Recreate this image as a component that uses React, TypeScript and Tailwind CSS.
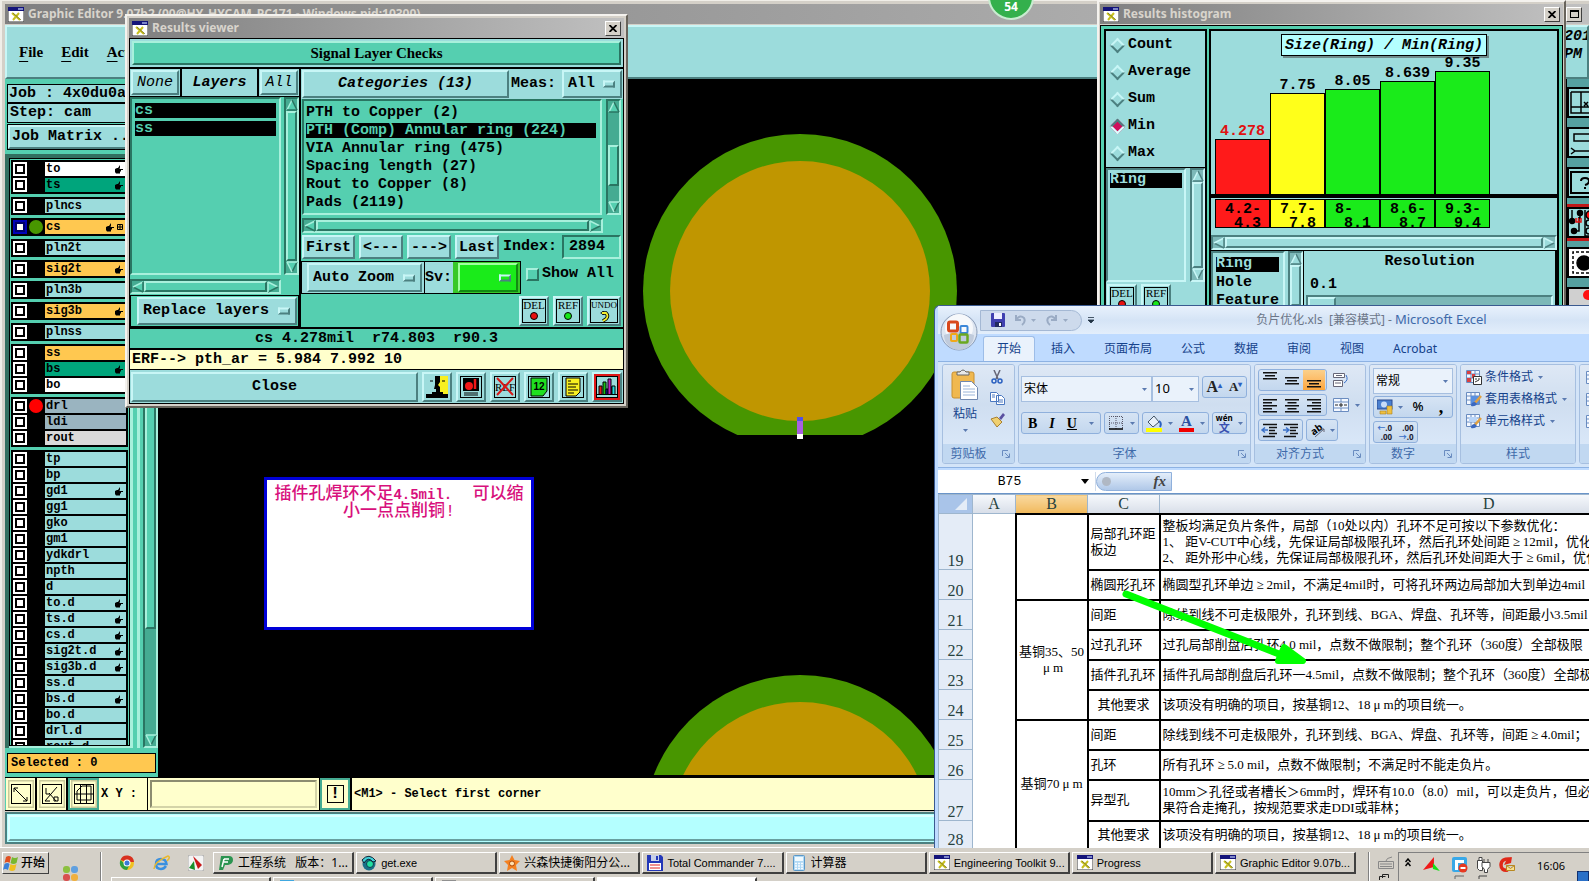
import { useState } from "react";
import type { ReactNode } from "react";
import clsx from "clsx";

const MONO = "font-['Liberation_Mono',monospace] font-bold text-[15px] leading-[18px]";
const MONO_SM = "font-['Liberation_Mono',monospace] font-bold text-[12px]";
const SERIF = "font-['Liberation_Serif',serif] font-bold";
const UI = "font-['Noto_Sans','Noto_Sans_CJK_SC',sans-serif]";

const BLUE_UP =
  "border-2 border-t-[#c8f6f6] border-l-[#c8f6f6] border-b-[#4c8080] border-r-[#4c8080] bg-[#9cdcdc]";
const BLUE_DOWN =
  "border-2 border-t-[#4c8080] border-l-[#4c8080] border-b-[#c8f6f6] border-r-[#c8f6f6] bg-[#9cdcdc]";
const GREEN_UP =
  "border-2 border-t-[#a8f0dc] border-l-[#a8f0dc] border-b-[#2a7562] border-r-[#2a7562] bg-[#55cfb0]";
const GREEN_DOWN =
  "border-2 border-t-[#2a7562] border-l-[#2a7562] border-b-[#a8f0dc] border-r-[#a8f0dc] bg-[#55cfb0]";
const WIN_UP =
  "border border-t-white border-l-white border-b-[#404040] border-r-[#404040] bg-[#d4d0c8]";

type LayerColor = "blue" | "white" | "green" | "orange" | "slate" | "gray";

interface Layer {
  name: string;
  color: LayerColor;
  hand?: boolean;
  dot?: "green" | "red";
  grid?: boolean;
}

const LAYER_BG: Record<LayerColor, string> = {
  blue: "bg-[#9cdcdc]",
  white: "bg-white",
  green: "bg-[#00a57c]",
  orange: "bg-[#ffc850]",
  slate: "bg-[#9ab4c0]",
  gray: "bg-[#dadada]",
};

const LAYER_GROUPS: Layer[][] = [
  [
    { name: "to", color: "white", hand: true },
    { name: "ts", color: "green", hand: true },
  ],
  [{ name: "plncs", color: "blue" }],
  [{ name: "cs", color: "orange", hand: true, dot: "green", grid: true }],
  [{ name: "pln2t", color: "blue" }],
  [{ name: "sig2t", color: "orange", hand: true }],
  [{ name: "pln3b", color: "blue" }],
  [{ name: "sig3b", color: "orange", hand: true }],
  [{ name: "plnss", color: "blue" }],
  [
    { name: "ss", color: "orange" },
    { name: "bs", color: "green", hand: true },
    { name: "bo", color: "white" },
  ],
  [
    { name: "drl", color: "slate", dot: "red" },
    { name: "ldi", color: "slate" },
    { name: "rout", color: "gray" },
  ],
  [
    { name: "tp", color: "blue" },
    { name: "bp", color: "blue" },
    { name: "gd1", color: "blue", hand: true },
    { name: "gg1", color: "blue" },
    { name: "gko", color: "blue" },
    { name: "gm1", color: "blue" },
    { name: "ydkdrl", color: "blue" },
    { name: "npth", color: "blue" },
    { name: "d", color: "blue" },
    { name: "to.d", color: "blue", hand: true },
    { name: "ts.d", color: "blue", hand: true },
    { name: "cs.d", color: "blue", hand: true },
    { name: "sig2t.d", color: "blue", hand: true },
    { name: "sig3b.d", color: "blue", hand: true },
    { name: "ss.d", color: "blue" },
    { name: "bs.d", color: "blue", hand: true },
    { name: "bo.d", color: "blue" },
    { name: "drl.d", color: "blue" },
    { name: "rout.d", color: "blue" },
  ],
];

const CATEGORIES = [
  "PTH to Copper (2)",
  "PTH (Comp) Annular ring (224)",
  "VIA Annular ring (475)",
  "Spacing length (27)",
  "Rout to Copper (8)",
  "Pads (2119)",
];

const BARS = [
  { value: "4.278", px: 55, bg: "bg-[#ff1a1a]", text: "text-[#e01010]", from: "4.2-", to: "4.3" },
  { value: "7.75", px: 101, bg: "bg-[#ffff1a]", text: "", from: "7.7-", to: "7.8" },
  { value: "8.05", px: 105, bg: "bg-[#1aeb1a]", text: "", from: "8-", to: "8.1" },
  { value: "8.639", px: 113, bg: "bg-[#1aeb1a]", text: "", from: "8.6-", to: "8.7" },
  { value: "9.35", px: 123, bg: "bg-[#1aeb1a]", text: "", from: "9.3-", to: "9.4" },
];

/* ---------- small shared pieces ---------- */

function WinIcon() {
  return (
    <svg width="16" height="15" viewBox="0 0 16 15" className="shrink-0">
      <rect width="16" height="15" fill="#fff" />
      <rect width="16" height="4" fill="#14147a" />
      <rect x="10" y="1" width="5" height="2" fill="#7d86c8" />
      <path d="M0 4v11h16V4" fill="none" stroke="#333" />
      <path d="M4 6l8 7M11 6l-6 7" stroke="#c8c020" strokeWidth="2" />
      <path d="M5 6l8 7" stroke="#55551a" strokeWidth="0.6" />
    </svg>
  );
}

function HandIcon() {
  return (
    <svg width="8" height="9" viewBox="0 0 8 9" className="shrink-0">
      <path d="M0 4l2-1h1l2-3v2.500L4.500 4H8v1H6v1H5.500v1H5v1.500H1L0 7z" fill="#000" />
    </svg>
  );
}

function Tri({ dir, dark, light, fill }: { dir: "up" | "down" | "left" | "right"; dark: string; light: string; fill: string }) {
  const turn = { up: 0, right: 90, down: 180, left: 270 }[dir];
  const litRight = dir === "down" || dir === "left";
  return (
    <svg width="12" height="12" viewBox="0 0 12 12" className="block shrink-0">
      <g transform={`rotate(${turn} 6 6)`}>
        <path d="M6 1L11 11H1z" fill={fill} />
        <path d="M1 11L6 1" stroke={litRight ? dark : light} strokeWidth="1.5" />
        <path d="M6 1L11 11" stroke={litRight ? light : dark} strokeWidth="1.5" />
        <path d="M11 11H1" stroke={dir === "down" || dir === "right" ? light : dark} strokeWidth="1.5" />
      </g>
    </svg>
  );
}

interface ScrollProps {
  vertical?: boolean;
  tone: "green" | "blue";
  before?: number;
  thumb?: number;
  after?: number;
}

function ScrollBar({ vertical, tone, before = 0, thumb = 1, after = 0 }: ScrollProps) {
  const green = tone === "green";
  const c = green
    ? { dark: "#2a7562", light: "#a8f0dc", fill: "#55cfb0" }
    : { dark: "#4c8080", light: "#c8f6f6", fill: "#9cdcdc" };
  const trough = green
    ? "border-t-[#2a7562] border-l-[#2a7562] border-b-[#a8f0dc] border-r-[#a8f0dc] bg-[#45ab92]"
    : "border-t-[#4c8080] border-l-[#4c8080] border-b-[#c8f6f6] border-r-[#c8f6f6] bg-[#7cb8b8]";
  return (
    <div className={clsx("flex shrink-0 border-2", vertical ? "w-[15px] flex-col" : "h-[15px]", trough)}>
      <Tri dir={vertical ? "up" : "left"} {...c} />
      <div style={{ flexGrow: before }} />
      <div className={green ? GREEN_UP : BLUE_UP} style={{ flexGrow: thumb }} />
      <div style={{ flexGrow: after }} />
      <Tri dir={vertical ? "down" : "right"} {...c} />
    </div>
  );
}

function TitleBar({ title, children }: { title: string; children?: ReactNode }) {
  return (
    <div
      className={clsx(
        UI,
        "flex h-[20px] shrink-0 items-center gap-[4px] bg-gradient-to-r from-[#808080] to-[#c0c0c0] px-[3px] text-[12px] leading-[18px] font-bold text-[#d8d4cc]"
      )}
    >
      <WinIcon />
      <span className="flex-1 truncate">{title}</span>
      {children}
    </div>
  );
}

function CloseButton() {
  return (
    <button aria-label="Close window" className={clsx(WIN_UP, "flex h-[15px] w-[16px] items-center justify-center")}>
      <svg width="8" height="7" viewBox="0 0 8 7">
        <path d="M0.5 0L7.5 7M7.5 0L0.5 7" stroke="#000" strokeWidth="1.8" />
      </svg>
    </button>
  );
}

function OptionMenu({ label, options, className }: { label: string; options: string[]; className?: string }) {
  return (
    <div className={clsx("relative", className)}>
      <select aria-label={label} className="h-full w-full appearance-none pr-[20px] pl-[4px] outline-none">
        {options.map((o) => (
          <option key={o}>{o}</option>
        ))}
      </select>
      <span className="pointer-events-none absolute top-1/2 right-[5px] h-[7px] w-[12px] -translate-y-1/2 border-2 border-t-[#c8f6f6] border-r-[#4c8080] border-b-[#4c8080] border-l-[#c8f6f6]" />
    </div>
  );
}

function SmallTool({ label, mark }: { label: string; mark: "red" | "green" | "undo" }) {
  return (
    <button
      aria-label={label}
      className={clsx(BLUE_UP, "flex h-[30px] items-center justify-center", mark === "undo" ? "w-[34px]" : "w-[30px]")}
    >
      <span
        className={clsx(
          "flex h-[24px] flex-col items-center border border-black bg-[#9cdcdc] font-['Liberation_Serif',serif] leading-[11px] font-normal",
          mark === "undo" ? "w-[28px] text-[9px]" : "w-[24px] text-[11px]"
        )}
      >
        {label}
        {mark === "undo" ? (
          <svg width="11" height="11" viewBox="0 0 11 11">
            <path d="M3 2h4q3 3 0 6l-3 2" fill="none" stroke="#000" strokeWidth="3.4" />
            <path d="M1 2l4-2v4z" fill="#000" />
            <path d="M3 2h4q3 3 0 6l-3 2" fill="none" stroke="#f4ee30" strokeWidth="1.8" />
          </svg>
        ) : (
          <span
            className={clsx("mt-px h-[8px] w-[8px] rounded-full border border-black", mark === "red" ? "bg-[#e81010]" : "bg-[#18e818]")}
          />
        )}
      </span>
    </button>
  );
}

/* ---------- Graphic Editor ---------- */

function LayerRow({ layer }: { layer: Layer }) {
  const active = layer.grid;
  return (
    <label className="flex h-[16px] w-full pb-[2px]">
      <input
        type="checkbox"
        className={clsx(
          "h-[14px] w-[14px] shrink-0 appearance-none border-2 bg-white",
          active ? "border-[#0000b8] shadow-[inset_0_0_0_2px_#000068]" : "border-white shadow-[inset_0_0_0_2px_#000]"
        )}
      />
      <span className="flex w-[18px] shrink-0 justify-end pr-[2px]">
        {layer.dot && (
          <span className={clsx("h-[14px] w-[14px] rounded-full", layer.dot === "green" ? "bg-[#489600]" : "bg-[#ff0000]")} />
        )}
      </span>
      <span className={clsx("flex flex-1 items-center justify-end gap-[3px] pr-[3px] pl-px", LAYER_BG[layer.color])}>
        <span className={clsx(MONO_SM, "flex-1 leading-[14px]")}>{layer.name}</span>
        {layer.hand && <HandIcon />}
        {layer.grid && (
          <svg width="6" height="6" viewBox="0 0 6 6">
            <path d="M0.5 0.5h5v5h-5zM3 0v6M0 3h6" fill="none" stroke="#000" />
          </svg>
        )}
      </span>
    </label>
  );
}

function LayerPanel() {
  return (
    <aside className="flex w-[153px] shrink-0 flex-col bg-[#55cfb0] pt-[5px]">
      <div className="mx-[2px] flex shrink-0 flex-col">
        <div className={clsx(MONO, "h-[19px] truncate border border-black bg-[#9cdcdc] px-px")}>Job : 4x0du0a</div>
        <div className={clsx(MONO, "h-[20px] truncate border border-black bg-[#9cdcdc] px-[2px]")}>Step: cam</div>
        <div className="mt-px flex border border-black">
          <button className={clsx(BLUE_UP, MONO, "h-[24px] w-full truncate px-[2px] text-left")}>Job Matrix ...</button>
        </div>
      </div>
      <div className="mt-[4px] flex min-h-0 flex-1 border-t-4 border-l-4 border-[#336f60]">
        <div className="flex min-w-0 flex-1 flex-col border-b-2 border-[#a8f0dc]">
          <div className="flex min-h-0 flex-1 flex-col gap-[3px] overflow-hidden border border-black p-px pb-0">
            {LAYER_GROUPS.map((group) => (
              <div key={group[0].name} className="shrink-0 bg-black px-[2px] pt-[2px]">
                {group.map((layer) => (
                  <LayerRow key={layer.name} layer={layer} />
                ))}
              </div>
            ))}
          </div>
        </div>
        <div className="flex w-[13px]">
          <div className="flex-1 border-l-3 border-[#a8f0dc]" />
          <div className="w-[6px] border-l-3 border-[#a8f0dc]" />
        </div>
        <ScrollBar vertical tone="green" thumb={458} after={106} />
      </div>
      <div className={clsx(MONO_SM, "mx-[2px] mt-[5px] mb-[4px] h-[20px] shrink-0 border border-black bg-[#ffc850] px-[3px] leading-[18px]")}>
        Selected : 0
      </div>
    </aside>
  );
}

function BoardCanvas() {
  return (
    <div className="relative min-w-0 flex-1 bg-black">
      <svg className="absolute inset-0 h-full w-full">
        <clipPath id="flat">
          <rect x="400" y="0" width="500" height="356" />
        </clipPath>
        <g clipPath="url(#flat)">
          <circle cx="642" cy="212" r="157" fill="#489600" />
          <circle cx="642" cy="212" r="130" fill="#c09600" />
        </g>
        <rect x="639" y="338" width="6" height="17" fill="#a860e0" />
        <rect x="639" y="338" width="6" height="4" fill="#5050e8" />
        <rect x="639" y="355" width="6" height="5" fill="#fff" />
        <circle cx="642" cy="753" r="157" fill="#489600" />
        <circle cx="642" cy="753" r="130" fill="#c09600" />
        <rect x="0" y="696" width="100%" height="10" fill="#000" />
      </svg>
      <div className="absolute top-[398px] left-[106px] h-[153px] w-[270px] border-3 border-[#0000d8] bg-white pt-[6px] text-center font-['Liberation_Mono','Noto_Sans_CJK_SC',monospace] text-[17px] leading-[17px] font-medium text-[#d8107c]">
        插件孔焊环不足<b className="text-[14px] leading-[14px]">4.5mil.</b>&nbsp; 可以缩小一点点削铜!
      </div>
    </div>
  );
}

function CommandBar() {
  return (
    <div className={clsx(MONO_SM, "flex h-[34px] shrink-0 border-y border-black bg-[#55cfb0] pl-px")}>
      {["zoom", "angle", "grid"].map((tool) => (
        <button
          key={tool}
          aria-label={tool}
          className={clsx(
            "flex w-[31px] items-center justify-center border-r-2 bg-[#ffffcc]",
            tool === "grid" ? "border-2 border-[#45ab92]" : "border-black"
          )}
        >
          <svg width="26" height="28" viewBox="0 0 26 28" fill="none" stroke="#000">
            <rect x="0.5" y="0.5" width="25" height="27" stroke="#c8c89a" strokeWidth="2" />
            <rect x="3.5" y="4.5" width="19" height="19" />
            {tool === "zoom" && <path d="M6 8l13 13M6 12V8h4M15 21h4v-4" />}
            {tool === "angle" && <path d="M18 7L6 21h5M7 8v6h4M10 13l7 8M15 17h4v4h-4z" />}
            {tool === "grid" && <path d="M9.500 5v18M15.500 5v18M4 14h18M6 20V11l5-5h9v14z" />}
          </svg>
        </button>
      ))}
      <label htmlFor="xy" className="flex w-[48px] items-center bg-[#ffffcc] pl-[2px] whitespace-pre">
        X Y :
      </label>
      <div className="flex w-[173px] border-x border-black bg-[#ffffcc] p-[2px]">
        <input id="xy" className="w-full border-2 border-t-[#8c8c70] border-r-[#d4d4a8] border-b-[#d4d4a8] border-l-[#8c8c70] bg-[#ffffcc] px-1 outline-none" />
      </div>
      <button aria-label="Interrupt" className="flex w-[30px] items-center justify-center border-2 border-[#45ab92] bg-[#ffffcc]">
        <span className="flex h-[18px] w-[17px] items-center justify-center border border-black text-[16px]">!</span>
      </button>
      <div className="flex flex-1 items-center border-l-2 border-black bg-[#ffffcc] px-[2px]">&lt;M1&gt; - Select first corner</div>
    </div>
  );
}

function SideTools() {
  const frames = ["bg-[#9cdcdc]", "bg-[#9cdcdc]", "bg-[#9cdcdc]", "bg-[#9cdcdc] outline-3 outline-[#c01818]", "bg-white", "bg-[#d0d0d0]"];
  return (
    <div className="flex w-[22px] shrink-0 flex-col gap-[9px] overflow-hidden bg-[#55a0a0] pt-[8px]">
      {frames.map((frame, i) => (
        <button key={i} aria-label={`Tool ${i + 1}`} className={clsx("h-[31px] w-[34px] shrink-0 border-2 border-black", frame)}>
          <svg width="30" height="27" viewBox="0 0 30 27" fill="none" stroke="#000" strokeWidth="1.5">
            {i === 0 && <path d="M2 3h28M2 3v21h28M12 3v21M2 18h28M15 13l4 4M19 13l-4 4" />}
            {i === 1 && <path d="M30 5H5v7h25M2 19l4 3-4 3M6 22h24" />}
            {i === 2 && <path d="M30 3H2v21h28M12 12q0-3 4-3t4 3-4 4M15 19h2" strokeWidth="2" />}
            {i === 3 && (
              <>
                <path d="M3 1v12M11 3v7M5 22h5V8M16 1v26h14" />
                <circle cx="3" cy="12" r="2.5" fill="#000" />
                <circle cx="11" cy="4" r="2.5" fill="#000" />
                <circle cx="5" cy="22" r="2.5" fill="#000" />
                <path d="M7 9v4h5V9M9.500 9v4" stroke="#e01010" />
                <circle cx="21" cy="6" r="4" fill="#ff1010" />
                <circle cx="20" cy="14" r="3" />
                <circle cx="20" cy="22" r="3" />
              </>
            )}
            {i === 4 && (
              <>
                <path d="M30 3H4v21h26" strokeDasharray="3 2" />
                <circle cx="15" cy="14" r="7" fill="#000" />
              </>
            )}
            {i === 5 && <circle cx="19" cy="6" r="5" fill="#ff1010" stroke="none" />}
          </svg>
        </button>
      ))}
    </div>
  );
}

function GraphicEditor() {
  return (
    <main className="flex min-h-0 flex-1 flex-col border-t border-l-2 border-[#f0eee8] bg-[#d4d0c8] pt-[3px] pb-[3px] pl-[3px]">
      <TitleBar title="Graphic Editor 9.07b2 (00@HY_HYCAM_PC171 - Windows  pid:10300)">
        <button aria-label="Maximize" className={clsx(WIN_UP, "mr-[4px] flex h-[15px] w-[16px] items-center justify-center")}>
          <span className="h-[8px] w-[9px] border border-t-2 border-black" />
        </button>
      </TitleBar>
      <nav
        className={clsx(
          SERIF,
          BLUE_UP,
          "mt-px flex h-[54px] shrink-0 items-center gap-[18px] pl-[12px] text-[15px]"
        )}
      >
        {["File", "Edit", "Actions"].map((m) => (
          <button key={m}>
            <span className="underline underline-offset-4">{m[0]}</span>
            {m.slice(1)}
          </button>
        ))}
        <span className={clsx(MONO, "ml-auto w-[23px] self-start overflow-hidden pt-px leading-[16px] whitespace-pre italic")}>{"2011\nPM"}</span>
      </nav>
      <div className="flex min-h-0 flex-1">
        <LayerPanel />
        <BoardCanvas />
        <SideTools />
      </div>
      <CommandBar />
      <div className="mt-px h-[32px] shrink-0 border-2 border-[#4c8080] bg-[#b4ffff] p-px">
        <div className="h-full border-2 border-t-[#dcffff] border-r-[#68a0a0] border-b-[#68a0a0] border-l-[#dcffff]" />
      </div>
    </main>
  );
}

/* ---------- Results viewer ---------- */

function ViewerTool({ children, label, hot }: { children: ReactNode; label: string; hot?: boolean }) {
  return (
    <button
      aria-label={label}
      className={clsx("flex h-[30px] w-[30px] items-center justify-center", BLUE_UP, hot && "outline-2 -outline-offset-4 outline-[#e01818]")}
    >
      <svg width="22" height="22" viewBox="0 0 22 22">
        {children}
      </svg>
    </button>
  );
}

function ResultsViewer() {
  const [category, setCategory] = useState(1);
  const [showAll, setShowAll] = useState(false);

  return (
    <section
      className={clsx(
        MONO,
        "absolute top-[14px] left-[125px] w-[503px] border-2 border-t-[#f4f2ee] border-r-[#68645c] border-b-[#68645c] border-l-[#f4f2ee] bg-[#d4d0c8] p-[2px]"
      )}
    >
      <TitleBar title="Results viewer">
        <CloseButton />
      </TitleBar>

      <div className="border border-black bg-[#9cdcdc]">
        <div className="p-[2px]">
          <h2 className={clsx(SERIF, GREEN_UP, "h-[24px] text-center text-[15px] leading-[20px]")}>Signal Layer Checks</h2>
        </div>

        <div className="flex border-y-2 border-black">
          {/* Layers */}
          <div className="flex w-[171px] flex-col border-r-2 border-black bg-[#55cfb0]">
            <div className="flex h-[28px] border-b border-black bg-[#9cdcdc] italic">
              <div className="flex border-r-2 border-black p-px">
                <button className={clsx(BLUE_UP, "w-[48px] font-normal italic")}>None</button>
              </div>
              <div className="flex-1 text-center leading-[28px]">Layers</div>
              <div className="flex border-l-2 border-black p-px">
                <button className={clsx(BLUE_UP, "w-[38px] font-normal italic")}>All</button>
              </div>
            </div>
            <div className="flex h-[178px] gap-[3px]">
              <ul className={clsx(GREEN_DOWN, "flex flex-1 flex-col gap-[3px] px-[3px] pt-[4px]")}>
                {["cs", "ss"].map((l) => (
                  <li key={l} className="h-[15px] bg-black leading-[15px] text-[#55cfb0]">
                    {l}
                  </li>
                ))}
              </ul>
              <ScrollBar vertical tone="green" />
            </div>
            <div className="mt-[4px] mr-[18px] flex flex-col">
              <ScrollBar tone="green" />
            </div>
            <div className="mt-px flex h-[32px] border border-black py-px pr-px pl-[6px]">
              <OptionMenu label="Layer mode" options={["Replace layers"]} className={clsx(BLUE_UP, "w-full")} />
            </div>
          </div>

          {/* Categories */}
          <div className="flex flex-1 flex-col bg-[#55cfb0]">
            <div className="flex h-[30px] items-center bg-[#9cdcdc] px-px">
              <button className={clsx(BLUE_UP, "h-[28px] w-[207px] italic")}>Categories (13)</button>
              <span className="flex-1 pl-[2px]">Meas:</span>
              <OptionMenu label="Measurement" options={["All"]} className={clsx(BLUE_UP, "h-[28px] w-[60px]")} />
            </div>
            <div className="mr-[2px] ml-px flex h-[116px] gap-[4px]">
              <ul className={clsx(GREEN_DOWN, "flex-1 pt-[4px] pr-[4px] pl-[2px]")}>
                {CATEGORIES.map((c, i) => (
                  <li key={c} className="h-[18px]">
                    <button
                      onClick={() => setCategory(i)}
                      className={clsx("block h-[15px] w-full text-left leading-[15px]", i === category && "bg-black text-[#55cfb0]")}
                    >
                      {c}
                    </button>
                  </li>
                ))}
              </ul>
              <ScrollBar vertical tone="green" before={34} thumb={40} after={16} />
            </div>
            <div className="mt-[3px] mr-[20px] ml-px flex flex-col">
              <ScrollBar tone="green" />
            </div>
            <div className="mt-[2px] mr-[2px] ml-px flex h-[24px] gap-[4px]">
              <button className={clsx(BLUE_UP, "w-[53px] leading-[19px]")}>First</button>
              <button className={clsx(BLUE_UP, "w-[44px] leading-[19px]")}>&lt;---</button>
              <button className={clsx(BLUE_UP, "w-[44px] leading-[19px]")}>---&gt;</button>
              <button className={clsx(BLUE_UP, "w-[44px] leading-[19px]")}>Last</button>
              <label htmlFor="index" className="flex-1 leading-[23px]">
                Index:
              </label>
              <input id="index" defaultValue="2894" className={clsx(GREEN_DOWN, "w-[59px] pl-[5px] outline-none")} />
            </div>
            <div className="mt-[2px] flex h-[33px] gap-[5px]">
              <div className="flex border border-black bg-[#9cdcdc]">
                <div className="border-r border-black py-px pr-[2px] pl-[5px]">
                  <OptionMenu label="Zoom" options={["Auto Zoom"]} className={clsx(BLUE_UP, "h-full w-[115px]")} />
                </div>
                <span className="w-[28px] leading-[31px]">Sv:</span>
                <div className="bg-[#38c828] py-px pr-[2px] pl-[5px]">
                  <OptionMenu
                    label="Severity"
                    options={[""]}
                    className="h-full w-[60px] border-2 border-t-[#a0ffa0] border-r-[#128a12] border-b-[#128a12] border-l-[#a0ffa0] bg-[#1aeb1a]"
                  />
                </div>
              </div>
              <label className="flex items-start gap-[3px] pt-[4px]">
                <input
                  type="checkbox"
                  checked={showAll}
                  onChange={(e) => setShowAll(e.target.checked)}
                  className={clsx(GREEN_UP, "mt-[3px] h-[13px] w-[13px] appearance-none")}
                />
                Show All
              </label>
            </div>
            <div className="mt-[2px] mr-[2px] flex justify-end gap-[4px]">
              <SmallTool label="DEL" mark="red" />
              <SmallTool label="REF" mark="green" />
              <SmallTool label="UNDO" mark="undo" />
            </div>
          </div>
        </div>

        <div className="h-[21px] border-b-2 border-black bg-[#55cfb0] text-center leading-[20px] whitespace-pre">cs 4.278mil  r74.803  r90.3</div>
        <div className="h-[20px] border-b border-black bg-[#ffffcc] pl-[2px] leading-[19px]">ERF--&gt; pth_ar = 5.984 7.992 10</div>

        <div className="flex h-[33px] items-center gap-[4px] px-px">
          <button className={clsx(BLUE_UP, "h-[30px] flex-1")}>Close</button>
          <ViewerTool label="Compare">
            <rect width="22" height="22" fill="#9cdcdc" />
            <path d="M11 0h11v22h-11z" fill="#f8f020" />
            <path d="M9 0h5v6l-2 3 2 2v5h3v2h5v4H0v-4h6v-2h4v-3H8l1-4z" fill="#000" />
            <path d="M4 5h3M16 5h3" stroke="#000" />
          </ViewerTool>
          <ViewerTool label="Snapshot">
            <rect x="0.5" y="0.5" width="21" height="21" fill="#9cdcdc" stroke="#000" />
            <rect x="3" y="2" width="16" height="13" fill="#000" />
            <circle cx="9" cy="10" r="4" fill="#f01818" />
            <path d="M15 3v10" stroke="#f01818" strokeWidth="2.500" />
            <path d="M4 17h14M4 19h14" stroke="#000" />
          </ViewerTool>
          <ViewerTool label="Clear reference">
            <rect x="0.5" y="0.5" width="21" height="21" fill="none" stroke="#000" />
            <text x="11" y="15" textAnchor="middle" className="font-['Liberation_Serif',serif] text-[11px] font-normal">
              REF
            </text>
            <path d="M3 2l16 17M19 2L3 19" stroke="#d81818" strokeWidth="2" />
          </ViewerTool>
          <ViewerTool label="Numbers">
            <rect x="0.5" y="0.5" width="21" height="21" fill="none" stroke="#000" />
            <path d="M3 2h16v13l-4 5H3z" fill="#20e020" stroke="#000" />
            <text x="11" y="14" textAnchor="middle" className="font-['Liberation_Sans',sans-serif] text-[10px] font-bold">
              12
            </text>
          </ViewerTool>
          <ViewerTool label="Report">
            <rect x="0.5" y="0.5" width="21" height="21" fill="none" stroke="#000" />
            <path d="M4 2h14v14l-4 4H4z" fill="#f8f020" stroke="#000" />
            <path d="M6 5h3M6 8h10M6 11h8M6 14h10M6 17h6" stroke="#000" />
          </ViewerTool>
          <ViewerTool label="Histogram" hot>
            <rect x="0.5" y="0.5" width="21" height="21" fill="#9cdcdc" stroke="#000" />
            <path d="M3 18V10h3v8M15 18V11h3v7" fill="#e01818" stroke="#000" />
            <path d="M7 18V6h3v12" fill="#18c018" stroke="#000" />
            <path d="M10 18v-5h2v5" fill="#2020d0" stroke="#000" />
            <path d="M12 18V3h3v15" fill="#c020c0" stroke="#000" />
            <path d="M16 18v-8h3v8" fill="#20e0e0" stroke="#000" />
            <path d="M0 18.500h22" stroke="#000" />
          </ViewerTool>
        </div>
      </div>
    </section>
  );
}

/* ---------- Results histogram ---------- */

function ResultsHistogram() {
  const [stat, setStat] = useState("Min");

  return (
    <section
      className={clsx(
        MONO,
        "absolute top-0 left-[1097px] w-[469px] border-2 border-t-[#f4f2ee] border-r-[#68645c] border-b-[#68645c] border-l-[#f4f2ee] bg-[#d4d0c8] px-px pt-[2px]"
      )}
    >
      <TitleBar title="Results histogram">
        <CloseButton />
      </TitleBar>
      <div className="mt-px flex gap-[2px] border border-black bg-[#55cfb0] p-[3px]">
        <div className="flex w-[103px] shrink-0 flex-col border-2 border-black bg-[#9cdcdc]">
          <div className="flex h-[136px] flex-col justify-between py-[5px] pl-[4px]">
            {["Count", "Average", "Sum", "Min", "Max"].map((s) => (
              <label key={s} className="flex items-center gap-[3px]">
                <input
                  type="radio"
                  name="stat"
                  checked={stat === s}
                  onChange={() => setStat(s)}
                  className={clsx(
                    "mx-[2px] h-[11px] w-[11px] rotate-45 appearance-none border-2",
                    stat === s
                      ? "border-t-[#4c8080] border-r-[#dcffff] border-b-[#dcffff] border-l-[#4c8080] bg-[#d0105c]"
                      : "border-t-[#c8f6f6] border-r-[#4c8080] border-b-[#4c8080] border-l-[#c8f6f6] bg-[#9cdcdc]"
                  )}
                />
                {s}
              </label>
            ))}
          </div>
          <div className="flex h-[115px] gap-[4px] border-t border-black">
            <div className={clsx(BLUE_DOWN, "flex-1 px-[2px] pt-[3px]")}>
              <div className="h-[15px] w-[72px] bg-black leading-[14px] text-[#9cdcdc]">Ring</div>
            </div>
            <ScrollBar vertical tone="blue" />
          </div>
          <div className="mt-[2px] flex gap-[4px] px-px">
            <SmallTool label="DEL" mark="red" />
            <SmallTool label="REF" mark="green" />
          </div>
        </div>

        <div className="flex min-w-0 flex-1 flex-col border-2 border-black bg-[#9cdcdc]">
          <div className="relative flex h-[167px] items-end border-b-4 border-black pl-[4px]">
            {BARS.map((b) => (
              <div key={b.value} className="w-[55px]">
                <div className={clsx("relative z-10 text-center leading-[15px]", b.text)}>{b.value}</div>
                <div className={clsx("border border-b-0 border-black", b.bg)} style={{ height: b.px }} />
              </div>
            ))}
            <div className="absolute top-[3px] left-[70px] border border-black bg-[#b4ffff] px-[3px] pt-[2px] pb-0 italic shadow-[2px_2px_0_#708c8c]">
              Size(Ring) / Min(Ring)
            </div>
          </div>
          <div className="flex h-[37px] pt-px pl-[4px]">
            {BARS.map((b) => (
              <div key={b.value} className={clsx("h-[29px] w-[55px] border border-black pt-[2px]", b.bg)}>
                <div className="pl-[9px] leading-[15px]">{b.from}</div>
                <div className="pl-[18px] leading-[14px]">{b.to}</div>
              </div>
            ))}
          </div>
          <ScrollBar tone="blue" />
          <div className="flex h-[70px] border-t border-black">
            <ul className={clsx(BLUE_DOWN, "w-[74px] overflow-hidden pt-[4px] pr-[4px] pl-[3px]")}>
              <li className="h-[15px] bg-black leading-[14px] text-[#9cdcdc]">Ring</li>
              <li className="mt-[2px]">Hole</li>
              <li>Feature</li>
            </ul>
            <div className="flex pl-[3px]">
              <ScrollBar vertical tone="blue" />
            </div>
            <div className="flex-1 border-r-2 border-l border-black">
              <label htmlFor="resolution" className="block pt-[2px] text-center">
                Resolution
              </label>
              <div className="pt-[5px] pl-[6px]">0.1</div>
              <div className="mx-[2px] mt-px flex h-[20px] border-2 border-t-[#4c8080] border-r-[#c8f6f6] border-b-[#c8f6f6] border-l-[#4c8080] bg-[#7cb8b8]">
                <input
                  id="resolution"
                  type="range"
                  defaultValue={0}
                  className="w-full appearance-none [&::-webkit-slider-thumb]:h-[16px] [&::-webkit-slider-thumb]:w-[28px] [&::-webkit-slider-thumb]:appearance-none [&::-webkit-slider-thumb]:border-2 [&::-webkit-slider-thumb]:border-t-[#c8f6f6] [&::-webkit-slider-thumb]:border-r-[#4c8080] [&::-webkit-slider-thumb]:border-b-[#4c8080] [&::-webkit-slider-thumb]:border-l-[#c8f6f6] [&::-webkit-slider-thumb]:bg-[#9cdcdc]"
                />
              </div>
            </div>
          </div>
        </div>
      </div>
    </section>
  );
}

/* ---------- Excel ---------- */

const BTN_GROUP = "flex h-[22px] items-center rounded-[3px] border border-[#8fb0dc] bg-gradient-to-b from-[#d6e4f4] to-[#c3d7ee]";

function Caret() {
  return (
    <svg width="5" height="3" viewBox="0 0 5 3" className="shrink-0">
      <path d="M0 0h5L2.500 3z" fill="#5a7ab0" />
    </svg>
  );
}

function Combo({ label, value, className }: { label: string; value: string; className: string }) {
  return (
    <div className={clsx("relative h-[26px] border border-[#a6bfe0] bg-[#eaf2fb]", className)}>
      <select aria-label={label} className="h-full w-full appearance-none px-[2px] outline-none">
        <option>{value}</option>
      </select>
      <span className="pointer-events-none absolute inset-y-0 right-[4px] flex items-center">
        <Caret />
      </span>
    </div>
  );
}

function RibbonGroup({ label, launcher, className, children }: { label: string; launcher?: boolean; className: string; children: ReactNode }) {
  return (
    <div className={clsx("flex shrink-0 flex-col overflow-hidden rounded-[3px] border border-[#a6bfe0]", className)}>
      <div className="flex-1 bg-gradient-to-b from-[#dee8f5] via-[#cfdef0] to-[#d9e7f8]">{children}</div>
      <div className="flex h-[19px] items-center justify-center bg-[#c1d8f1] px-[4px] text-[12px] text-[#3e6aaa]">
        <span className={clsx("flex-1 text-center", launcher && "pr-[12px]")}>{label}</span>
        {launcher && (
          <svg width="8" height="8" viewBox="0 0 8 8" fill="none" stroke="#6a8cc0">
            <path d="M0.500 6V0.500H6M3 3l4 4M7.500 3.500v4h-4" />
          </svg>
        )}
      </div>
    </div>
  );
}

function Lines({ widths, y = 3, right, center }: { widths: number[]; y?: number; right?: boolean; center?: boolean }) {
  return (
    <svg width="22" height="18" viewBox="0 0 22 18">
      {widths.map((w, i) => {
        const x = right ? 18 - w : center ? 11 - w / 2 : 4;
        return <rect key={i} x={x} y={y + i * 3} width={w} height="1.500" fill="#111" />;
      })}
    </svg>
  );
}

function Indent({ flip }: { flip?: boolean }) {
  return (
    <svg width="21" height="18" viewBox="0 0 21 18">
      <path d="M4 3.500h14M10 6.500h8M10 9.500h6M10 12.500h8M4 15.500h12" stroke="#111" strokeWidth="1.500" />
      <path d={flip ? "M3 9h5M6 6.500l3 2.500-3 2.500" : "M9 9H4M6 6.500L3 9l3 2.500"} stroke="#3a70c8" strokeWidth="1.500" fill="none" />
    </svg>
  );
}

function StyleIcon({ kind }: { kind: number }) {
  return (
    <svg width="16" height="16" viewBox="0 0 16 16">
      <path d="M0.500 1.500h13v12h-13zM0.500 5h13M0.500 9h13M5 1v12M9 1v12" fill="#f4f8ff" stroke="#6a8cc0" />
      {kind === 0 && <path d="M1 2h4v3H1zM1 9h4v4H1zM6 5h3v4H6z" fill="#d84040" />}
      {kind === 0 && <path d="M7.500 7.500h8v8h-8zM9 10h2M12 10h2M9 13l4-2" fill="#fff" stroke="#333" />}
      {kind === 1 && <path d="M5 5h8v8H5z" fill="#5a90e0" />}
      {kind === 2 && <path d="M3 4h8v5H3z" fill="#b8d4f8" />}
      {kind > 0 && <path d="M15 5l-7 8" stroke="#e0a040" strokeWidth="2.500" />}
      {kind > 0 && <path d="M9 11q-4 0-4 4 4 1 6-2z" fill="#3a68c0" />}
    </svg>
  );
}

function Ribbon() {
  return (
    <div className="flex h-[107px] shrink-0 gap-[3px] overflow-hidden border-y border-[#8db2e3] bg-[#d3e4f8] px-[4px] pt-[2px] pb-[3px] text-[12px]">
      <RibbonGroup label="剪贴板" launcher className="w-[73px]">
        <div className="flex gap-[11px] pt-[4px] pl-[8px] text-[#15428b]">
          <button className="flex flex-col items-center">
            <svg width="28" height="32" viewBox="0 0 28 32">
              <rect x="1" y="3" width="22" height="26" rx="2" fill="#f0b850" stroke="#c89030" />
              <path d="M6 6V3h3q3-4 6 0h3v3z" fill="#e8e8e8" stroke="#666" />
              <path d="M9.500 12.500h11l6 6v12h-17z" fill="#fff" stroke="#7088b0" />
              <path d="M12 17h7M12 20h12M12 23h12M12 26h12" stroke="#9ab4d8" />
            </svg>
            <span className="mt-[4px] leading-[18px]">粘贴</span>
            <span className="mt-[6px]">
              <Caret />
            </span>
          </button>
          <div className="flex flex-col gap-[8px] pt-px">
            <svg width="14" height="14" viewBox="0 0 14 14" fill="none">
              <path d="M4 0l4 9M10 0L6 9" stroke="#667" strokeWidth="1.500" />
              <circle cx="4" cy="11" r="2" stroke="#2a60c0" strokeWidth="1.500" />
              <circle cx="10" cy="11" r="2" stroke="#2a60c0" strokeWidth="1.500" />
            </svg>
            <svg width="15" height="13" viewBox="0 0 15 13" fill="#fff" stroke="#4a78c0">
              <path d="M0.500 0.500h6l2 2v7h-8zM6.500 3.500h5l3 3v6h-8z" />
              <path d="M2 3h3M2 5h3M8 8h5M8 10h5" />
            </svg>
            <svg width="15" height="14" viewBox="0 0 15 14">
              <path d="M9 5l4-5 2 2-4 5z" fill="#5a50a0" />
              <path d="M1 6l6-2 5 5-5 5z" fill="#f0d070" stroke="#a88030" />
            </svg>
          </div>
        </div>
      </RibbonGroup>

      <RibbonGroup label="字体" launcher className="w-[233px]">
        <div className="flex flex-col gap-[10px] px-[2px] pt-[11px]">
          <div className="flex items-start">
            <Combo label="Font" value="宋体" className="w-[131px]" />
            <Combo label="Size" value="10" className="w-[47px] text-[13px]" />
            <div className={clsx(BTN_GROUP, SERIF, "ml-[3px] w-[45px] justify-around text-[#222]")}>
              <button className="text-[16px]">
                A<sup className="text-[8px] text-[#2a60c0]">▴</sup>
              </button>
              <button className="text-[13px]">
                A<sup className="text-[8px] text-[#2a60c0]">▾</sup>
              </button>
            </div>
          </div>
          <div className="flex gap-[3px]">
            <div className={clsx(BTN_GROUP, SERIF, "w-[80px] justify-around text-[14px]")}>
              <button>B</button>
              <button className="italic">I</button>
              <button className="underline">U</button>
              <Caret />
            </div>
            <button aria-label="Borders" className={clsx(BTN_GROUP, "w-[35px] justify-around")}>
              <svg width="14" height="14" viewBox="0 0 14 14">
                <path d="M0.500 13V0.500h13V13M7 0v13M0 7h14" fill="none" stroke="#556" strokeDasharray="1 1" />
                <path d="M0 13h14" stroke="#000" strokeWidth="1.500" />
              </svg>
              <Caret />
            </button>
            <div className={clsx(BTN_GROUP, "w-[67px] justify-around")}>
              <svg width="16" height="17" viewBox="0 0 16 17">
                <path d="M2 7l6-6 5 6-6 5z" fill="#e8f0fa" stroke="#456" />
                <path d="M13 6q3 2 1 6" stroke="#2a60c0" strokeWidth="2" fill="none" />
                <rect y="13" width="16" height="4" fill="#ffff00" />
              </svg>
              <Caret />
              <span className={clsx(SERIF, "border-b-4 border-[#f00000] px-[2px] text-[15px] leading-[13px] text-[#2a50a0]")}>A</span>
              <Caret />
            </div>
            <button className={clsx(BTN_GROUP, "w-[35px] justify-around")}>
              <span className="flex flex-col items-center text-[8px] leading-[9px] font-bold">
                wén<span className="text-[11px] leading-[11px] text-[#3a50b0]">文</span>
              </span>
              <Caret />
            </button>
          </div>
        </div>
      </RibbonGroup>

      <RibbonGroup label="对齐方式" launcher className="w-[112px]">
        <div className="flex flex-col gap-[3px] px-[3px] pt-[4px]">
          <div className="flex items-center gap-[6px]">
            <div className={clsx(BTN_GROUP, "w-[69px]")}>
              <Lines widths={[14, 10, 14]} center y={1} />
              <Lines widths={[14, 10, 14]} center y={6} />
              <span className="bg-gradient-to-b from-[#fbd08a] to-[#fda63a] py-px">
                <Lines widths={[14, 10, 14]} center y={9} />
              </span>
            </div>
            <svg width="16" height="16" viewBox="0 0 16 16" fill="#fff" stroke="#667">
              <path d="M0.500 1.500h11v4h-11zM0.500 8.500h9v6h-9zM3 3.500h6M2 11h6" />
              <path d="M13 3q3 5-2 8" fill="none" stroke="#3a70c8" />
            </svg>
          </div>
          <div className="flex items-center gap-[6px]">
            <div className={clsx(BTN_GROUP, "w-[69px]")}>
              <Lines widths={[14, 9, 14, 9, 14]} />
              <Lines widths={[14, 9, 14, 9, 14]} center />
              <Lines widths={[14, 9, 14, 9, 14]} right />
            </div>
            <svg width="16" height="14" viewBox="0 0 16 14" fill="#f4f8ff" stroke="#6a8cc0">
              <path d="M0.500 0.500h15v13h-15zM0 4h16M0 10h16M8 0v4M8 10v4" />
              <path d="M2 7h3M11 7h3M7 6h2v2H7z" stroke="#222" />
            </svg>
            <Caret />
          </div>
          <div className="flex gap-[3px]">
            <div className={clsx(BTN_GROUP, "w-[45px]")}>
              <Indent />
              <Indent flip />
            </div>
            <button aria-label="Orientation" className={clsx(BTN_GROUP, "w-[32px] justify-around")}>
              <svg width="17" height="16" viewBox="0 0 17 16">
                <text x="2" y="12" transform="rotate(-35 6 9)" className="text-[10px] font-bold">
                  ab
                </text>
                <path d="M6 15l9-8M12 7h3v3" fill="none" stroke="#667" />
              </svg>
              <Caret />
            </button>
          </div>
        </div>
      </RibbonGroup>

      <RibbonGroup label="数字" launcher className="w-[88px]">
        <div className="flex flex-col gap-[2px] px-[3px] pt-[3px]">
          <Combo label="Number format" value="常规" className="w-full" />
          <div className={clsx(BTN_GROUP, "w-full gap-[5px] pl-[3px] text-[13px]")}>
            <svg width="16" height="16" viewBox="0 0 16 16">
              <rect y="1" width="15" height="9" fill="#4a80d0" stroke="#2a4a90" />
              <circle cx="7" cy="5.500" r="3" fill="#c8dcf8" />
              <path d="M10 7h5v8h-5zM3 12h6v3H3z" fill="#f0c040" stroke="#a88020" strokeWidth="0.600" />
            </svg>
            <Caret />
            <button className="w-[20px] font-medium">%</button>
            <button className={clsx(SERIF, "w-[16px] text-[18px] leading-[16px]")}>,</button>
          </div>
          <div className={clsx(BTN_GROUP, "mt-px w-[45px] justify-around text-[8px] leading-[9px] font-bold text-[#223]")}>
            <button className="text-right">
              <span className="text-[#3a70c8]">←</span>.0
              <br />
              .00
            </button>
            <button className="text-right">
              .00
              <br />
              <span className="text-[#3a70c8]">→</span>.0
            </button>
          </div>
        </div>
      </RibbonGroup>

      <RibbonGroup label="样式" className="w-[116px]">
        <div className="flex flex-col gap-[4px] pt-[3px] pl-[5px] text-[#15428b]">
          {["条件格式", "套用表格格式", "单元格样式"].map((s, i) => (
            <button key={s} className="flex h-[18px] items-center gap-[3px]">
              <StyleIcon kind={i} />
              <span>{s}</span>
              <span className="pl-[2px]">
                <Caret />
              </span>
            </button>
          ))}
        </div>
      </RibbonGroup>

      <RibbonGroup label="" className="w-[80px]">
        <div className="flex flex-col gap-[6px] pt-[5px] pl-[6px]">
          <StyleIcon kind={3} />
          <StyleIcon kind={3} />
          <StyleIcon kind={3} />
        </div>
      </RibbonGroup>
    </div>
  );
}

// symbols that take a full em in the sheet font
function SheetText({ text }: { text: string }) {
  return (
    <>
      {text.split(/([≥μ])/).map((part, i) =>
        part === "≥" || part === "μ" ? (
          <span key={i} className="inline-block w-[13px] text-center">
            {part}
          </span>
        ) : (
          part
        )
      )}
    </>
  );
}

interface SheetRow {
  n: number;
  height: number;
  b?: { text: string; span: number };
  c: string;
  center?: boolean;
  d: string[];
}

const SHEET: SheetRow[] = [
  {
    n: 19,
    height: 56,
    b: { text: "", span: 2 },
    c: "局部孔环距板边",
    d: [
      "整板均满足负片条件，局部（10处以内）孔环不足可按以下参数优化：",
      "1、 距V-CUT中心线，先保证局部极限孔环，然后孔环处间距≥12mil，优化时",
      "2、 距外形中心线，先保证局部极限孔环，然后孔环处间距大于≥6mil，优化时",
    ],
  },
  { n: 20, height: 30, c: "椭圆形孔环", d: ["椭圆型孔环单边≥2mil，不满足4mil时，可将孔环两边局部加大到单边4mil"] },
  { n: 21, height: 30, b: { text: "基铜35、50μm", span: 4 }, c: "间距", d: ["除线到线不可走极限外，孔环到线、BGA、焊盘、孔环等，间距最小3.5mil"] },
  { n: 22, height: 30, c: "过孔孔环", d: ["过孔局部削盘后孔环4.0 mil，点数不做限制；整个孔环（360度）全部极限"] },
  { n: 23, height: 30, c: "插件孔孔环", d: ["插件孔局部削盘后孔环一4.5mil，点数不做限制；整个孔环（360度）全部极"] },
  { n: 24, height: 30, c: "其他要求", center: true, d: ["该项没有明确的项目，按基铜12、18μm的项目统一。"] },
  { n: 25, height: 30, b: { text: "基铜70μm", span: 4 }, c: "间距", d: ["除线到线不可走极限外，孔环到线、BGA、焊盘、孔环等，间距≥4.0mil；"] },
  { n: 26, height: 30, c: "孔环", d: ["所有孔环≥5.0 mil，点数不做限制；不满足时不能走负片。"] },
  {
    n: 27,
    height: 41,
    c: "异型孔",
    d: ["10mm＞孔径或者槽长＞6mm时，焊环有10.0（8.0）mil，可以走负片，但必须", "果符合走掩孔，按规范要求走DDI或菲林；"],
  },
  { n: 28, height: 28, c: "其他要求", center: true, d: ["该项没有明确的项目，按基铜12、18μm的项目统一。"] },
];

function Sheet() {
  return (
    <div className="relative min-h-0 flex-1 overflow-hidden bg-white">
      <table className="w-[881px] table-fixed border-collapse bg-white font-['Liberation_Serif','Noto_Sans_CJK_SC',serif] text-[13px] leading-[16px] text-black">
        <colgroup>
          <col className="w-[34px]" />
          <col className="w-[43px]" />
          <col className="w-[72px]" />
          <col className="w-[72px]" />
          <col />
        </colgroup>
        <thead className="text-[16px] text-[#27413e]">
          <tr className="h-[19px] bg-gradient-to-b from-[#f6f9fc] to-[#d7dde8]">
            <th className="border border-[#9eb6ce] bg-[#a9c4e9] p-0">
              <svg width="30" height="14" viewBox="0 0 30 14">
                <path d="M28 1v12H16z" fill="#e4ecf7" />
              </svg>
            </th>
            {["A", "B", "C", "D"].map((h) => (
              <th
                key={h}
                className={clsx("border border-[#9eb6ce] p-0 font-normal", h === "B" && "bg-gradient-to-b from-[#f9d99f] to-[#f1b95a]")}
              >
                {h}
              </th>
            ))}
          </tr>
        </thead>
        <tbody>
          {SHEET.map((row) => (
            <tr key={row.n} style={{ height: row.height }}>
              <th className="border border-[#9eb6ce] bg-[#e4ecf7] p-0 align-bottom text-[16px] font-normal text-[#27413e]">{row.n}</th>
              <td className="p-0" />
              {row.b && (
                <td rowSpan={row.b.span} className="border-2 border-black p-0 text-center">
                  <SheetText text={row.b.text} />
                </td>
              )}
              <td className={clsx("border-2 border-black px-[2px] py-0", row.center && "text-center")}>{row.c}</td>
              <td className="border-2 border-black px-[2px] py-0 whitespace-nowrap">
                {row.d.map((line) => (
                  <div key={line}>
                    <SheetText text={line} />
                  </div>
                ))}
              </td>
            </tr>
          ))}
        </tbody>
      </table>
      <svg className="pointer-events-none absolute top-[94px] left-[181px]" width="190" height="80" viewBox="0 0 190 80">
        <path d="M7 6L160 66" stroke="#00ff00" strokeWidth="7" strokeLinecap="round" />
        <path d="M165 59L184 73L159 73z" fill="#00ff00" stroke="#00ff00" strokeWidth="6" strokeLinejoin="round" />
      </svg>
    </div>
  );
}

function OfficeButton() {
  return (
    <button aria-label="Office" className="absolute top-[7px] left-[5px]">
      <svg width="38" height="38" viewBox="0 0 38 38" fill="none">
        <circle cx="19" cy="19" r="18" fill="#dde5f0" stroke="#8a9cb8" />
        <circle cx="19" cy="15" r="14" fill="#f6f8fb" />
        <path d="M4 22a15 15 0 0030 0q-15-6-30 0z" fill="#c0cbdc" />
        <rect x="8.500" y="9" width="9" height="9" rx="1.500" stroke="#d8481c" strokeWidth="3" />
        <rect x="20.500" y="13" width="7" height="7" rx="1" stroke="#3a86d8" strokeWidth="2" />
        <rect x="11" y="21" width="6" height="7" rx="1" stroke="#f0a818" strokeWidth="2" />
        <rect x="19.500" y="21.500" width="8" height="8" rx="1" stroke="#6aa820" strokeWidth="2.500" />
      </svg>
    </button>
  );
}

function Excel() {
  const tabs = ["开始", "插入", "页面布局", "公式", "数据", "审阅", "视图", "Acrobat"];
  return (
    <section
      className={clsx(
        UI,
        "absolute top-[305px] right-0 bottom-[33px] left-[934px] flex flex-col overflow-hidden rounded-tl-[6px] border-t border-l border-[#3a5a90] bg-[#bfdbff] pl-[3px]"
      )}
    >
      <OfficeButton />
      <div className="flex h-[28px] shrink-0 items-center bg-gradient-to-b from-[#e8f1fc] via-[#d5e4f6] to-[#e3eefb] pl-[42px] text-[12px]">
        <div className="flex h-[21px] w-[102px] items-center gap-[9px] rounded-r-full border border-[#a4b8d4] bg-[#cddaec] pl-[10px]">
          <svg width="14" height="14" viewBox="0 0 14 14">
            <rect width="14" height="14" rx="1" fill="#4040b0" />
            <rect x="3" width="8" height="6" fill="#eef" />
            <rect x="4" y="9" width="7" height="5" fill="#222a60" />
            <rect x="8" y="10" width="2" height="3" fill="#fff" />
          </svg>
          <svg width="22" height="12" viewBox="0 0 22 12" fill="none" stroke="#9aabc4" strokeWidth="2">
            <path d="M2 1v5h5M2 6q4-6 8-2 2 4-2 7" />
            <path d="M17 5h5l-2.500 3z" fill="#9aabc4" stroke="none" />
          </svg>
          <svg width="24" height="12" viewBox="0 0 24 12" fill="none" stroke="#9aabc4" strokeWidth="2">
            <path d="M11 1v5H6M11 6Q7 0 3 4q-2 4 2 7" />
            <path d="M18 5h5l-2.500 3z" fill="#9aabc4" stroke="none" />
          </svg>
        </div>
        <svg width="6" height="6" viewBox="0 0 6 6" className="ml-[6px]">
          <path d="M0 0.500h6M0 3h6L3 6z" fill="#234" stroke="#234" strokeWidth="0.800" />
        </svg>
        <h1 className="flex-1 pl-[60px] text-center whitespace-pre text-[#6c7688]">
          负片优化.xls  [兼容模式] - <span className="text-[13px] text-[#3e6aaa]">Microsoft Excel</span>
        </h1>
      </div>
      <nav className="flex h-[27px] shrink-0 items-end gap-[3px] pl-[45px] text-[12px] text-[#15428b]">
        {tabs.map((t, i) => (
          <button
            key={t}
            className={clsx("h-[25px] rounded-t-[3px] px-[13px]", i === 0 && "border border-b-0 border-[#9dbde8] bg-[#eaf2fc] px-[11px]")}
          >
            {t}
          </button>
        ))}
      </nav>
      <Ribbon />
      <div className="mt-[2px] flex h-[24px] shrink-0 items-center border-b border-[#6a94c8] bg-white font-['Liberation_Mono',monospace] text-[13px]">
        <div className="flex w-[158px] items-center border-r border-[#d0dcec] pr-[6px]">
          <input aria-label="Name box" defaultValue="B75" className="w-full text-center outline-none" />
          <svg width="8" height="5" viewBox="0 0 8 5" className="shrink-0">
            <path d="M0 0h8L4 5z" fill="#000" />
          </svg>
        </div>
        <div className="flex h-[19px] w-[76px] items-center justify-between rounded-l-full border border-[#8fb0dc] bg-gradient-to-b from-[#e4eefa] to-[#b0c8e8] px-[5px]">
          <span className="h-[9px] w-[9px] rounded-full bg-[#b0b8c4]" />
          <i className="font-['Liberation_Serif',serif] text-[15px] font-bold text-[#444]">fx</i>
        </div>
        <input aria-label="Formula" className="flex-1 px-1 outline-none" />
      </div>
      <Sheet />
    </section>
  );
}

/* ---------- Taskbar ---------- */

const TASKS = ["工程系统   版本：1...", "get.exe", "兴森快捷衡阳分公...", "Total Commander 7....", "计算器", "Engineering Toolkit 9...", "Progress", "Graphic Editor 9.07b..."];

function TaskIcon({ index }: { index: number }) {
  if (index > 4) return <WinIcon />;
  return (
    <svg width="16" height="16" viewBox="0 0 16 16" className="shrink-0">
      {index === 0 && (
        <>
          <path d="M3 1h8q4 0 4 4t-5 5H7l-2 5H1z" fill="#2c9450" />
          <path d="M6 4h5M6 7h4M6 4L4 12" stroke="#fff" strokeWidth="1.500" fill="none" />
        </>
      )}
      {index === 1 && (
        <>
          <circle cx="8" cy="9" r="6.500" fill="#1c7088" />
          <circle cx="9" cy="9" r="3.500" fill="#20e0a0" stroke="#104050" />
          <path d="M1 5q7-8 14 1l-3 1Q7 1 3 8z" fill="#40d0d8" stroke="#123" />
        </>
      )}
      {index === 2 && (
        <>
          <path d="M8 0l2.500 5 5.500 1-4 4 1 6-5-3-5 3 1-6-4-4 5.500-1z" fill="#f48020" />
          <circle cx="8" cy="8.500" r="2.500" fill="#ffe0b0" stroke="#b04808" />
        </>
      )}
      {index === 3 && (
        <>
          <path d="M0 0h14l2 2v14H0z" fill="#2438b8" />
          <rect x="4" width="8" height="6" fill="#c8d0e8" />
          <rect x="9" y="1" width="2" height="4" fill="#2438b8" />
          <rect x="2" y="8" width="12" height="7" fill="#fff" />
          <path d="M3 10h10M3 13h10" stroke="#e02020" />
        </>
      )}
      {index === 4 && (
        <>
          <rect x="2.500" y="0.500" width="11" height="15" rx="1" fill="#b0d8f4" stroke="#5a98c8" />
          <rect x="4" y="2" width="8" height="4" fill="#f0faff" />
          <path d="M4 8.500h8M4 11h8M4 13.500h8" stroke="#f8fcff" strokeWidth="1.500" strokeDasharray="2 1" />
        </>
      )}
    </svg>
  );
}

function Taskbar() {
  return (
    <footer className={clsx(UI, "flex h-[34px] shrink-0 overflow-hidden border-t border-white bg-[#d4d0c8] pt-[4px] text-[11px] leading-[18px]")}>
      <button className={clsx(WIN_UP, "ml-[2px] flex h-[22px] w-[47px] items-center gap-[2px] text-[12px] font-medium")}>
        <svg width="16" height="15" viewBox="0 0 16 15">
          <path d="M3 1q3-2 5 0L6.500 7q-2-2-5 0z" fill="#e05020" />
          <path d="M9 1q3 2 6 0l-1.500 6q-3 2-6 0z" fill="#78b830" />
          <path d="M1.500 8q3-2 5 0L5 14q-3-2-5 0z" fill="#3a80d8" />
          <path d="M7.500 8q3 2 6 0L12 14q-3 2-6 0z" fill="#f0c020" />
        </svg>
        开始
      </button>
      <svg width="16" height="18" viewBox="0 0 16 18" className="mt-[14px] ml-[14px]">
        <rect width="7" height="7" rx="3" fill="#8cc040" />
        <rect x="8" width="7" height="7" rx="3" fill="#60a0e0" />
        <rect y="8" width="7" height="7" rx="3" fill="#d85050" />
        <rect x="8" y="8" width="7" height="7" rx="3" fill="#f0b040" />
      </svg>
      <div className="ml-[21px] border-r border-l border-[#808080] border-r-white" />
      <div className="mt-[3px] ml-[17px] flex w-[94px] gap-[18px]">
        <svg width="16" height="16" viewBox="0 0 16 16">
          <circle cx="8" cy="8" r="7" fill="#f0c020" />
          <path d="M1.500 5A7 7 0 0115 7H8z" fill="#d83020" />
          <path d="M1.500 5A7 7 0 008 15l3-6H6z" fill="#30a040" />
          <circle cx="8" cy="8" r="3.500" fill="#fff" />
          <circle cx="8" cy="8" r="2.500" fill="#3a78d8" />
        </svg>
        <svg width="17" height="16" viewBox="0 0 17 16" fill="none">
          <path d="M13 11q-2 3-5 3-5 0-5-5t5-5 5.500 5H4" stroke="#3a90e0" strokeWidth="2.500" />
          <path d="M1 14Q1 7 15 1q3 1-1 5" stroke="#e8b830" strokeWidth="1.500" />
        </svg>
        <svg width="16" height="16" viewBox="0 0 16 16">
          <rect width="16" height="16" rx="2" fill="#f4f4f4" stroke="#aaa" />
          <path d="M5 1l9 9-4 4z" fill="#c81818" />
          <path d="M1 13l5-7 1 9z" fill="#18902c" />
        </svg>
      </div>
      <div className="flex min-w-0 flex-1 flex-col gap-[3px]">
        <div className="flex gap-[2px]">
          {TASKS.map((t, i) => (
            <button key={t} className={clsx(WIN_UP, "flex h-[22px] min-w-0 flex-1 items-center gap-[4px] border-r-2 border-b-2 pl-[4px]")}>
              <TaskIcon index={i} />
              <span
                className={clsx(
                  "truncate whitespace-pre",
                  /^[A-Za-z]/.test(t) ? "font-['Liberation_Sans',sans-serif] text-[11px]" : "text-[12px]"
                )}
              >
                {t}
              </span>
            </button>
          ))}
        </div>
        <div className="-ml-[102px] flex gap-[2px]">
          {[0, 1, 2, 3].map((i) => (
            <button
              key={i}
              aria-label={`Window ${i + 1}`}
              className={clsx(WIN_UP, "h-[22px] w-[160px] border-r-2 pl-[6px]", i === 3 && "border-t-2 border-t-[#404040] bg-white")}
            >
              <span
                className={clsx("block h-[16px] w-[14px]", i === 1 && "bg-[#40a8e0]", i === 2 && "bg-[#909090]", i === 3 && "border border-[#30a040]")}
              />
            </button>
          ))}
        </div>
      </div>
      <div className="ml-[12px] border-r border-l border-[#808080] border-r-white" />
      <div className="mt-[4px] w-[28px] pl-[8px]">
        <svg width="16" height="24" viewBox="0 0 16 24" fill="none" stroke="#888">
          <path d="M0.500 5.500h15v7H0.500zM2 8h12M2 10.500h12M8 5q0-3 6-4" />
          <path d="M4.500 22V18.500h6V22M1.500 24v-3.500h6" stroke="#222" />
        </svg>
      </div>
      <div className="flex w-[191px] gap-[12px] border-t border-l border-[#808080] pt-[4px] pl-[6px]">
        <svg width="6" height="10" viewBox="0 0 6 10" fill="none" stroke="#000" strokeWidth="1.500" className="mt-px">
          <path d="M0.500 4L3 1l2.500 3M0.500 8L3 5l2.500 3" />
        </svg>
        <svg width="17" height="15" viewBox="0 0 17 15">
          <path d="M0 13L11 0v10z" fill="#f01818" />
          <path d="M10 6l7 8-7-2z" fill="#18e018" />
        </svg>
        <div className="flex gap-[8px]">
          <svg width="16" height="24" viewBox="0 0 16 24">
            <rect width="15" height="15" rx="2" fill="#38a8e8" />
            <path d="M3 3h9v3H6v7H3z" fill="#fff" />
            <circle cx="11" cy="11" r="4.500" fill="#e83820" />
            <path d="M8.500 11h5" stroke="#fff" strokeWidth="2" />
            <path d="M3 22v-3h9" stroke="#666" fill="none" />
          </svg>
          <svg width="15" height="24" viewBox="0 0 15 24" fill="#fff" stroke="#444">
            <path d="M1.500 3.500h5v10h-3l-2-2z" />
            <path d="M6 5.500h8v4l-2.500 3v3h-3v-3L6 9.500z" />
            <path d="M8 5V2M12 5V2M3 3V0.500h3V3" />
            <path d="M3 22v-3h8" fill="none" />
          </svg>
          <svg width="16" height="15" viewBox="0 0 16 15">
            <path d="M12 2Q2 1 2 8q0 6 7 5" fill="none" stroke="#e02818" strokeWidth="3.500" />
            <path d="M5 8l3-6 5-2-1 6z" fill="#e02818" />
            <path d="M7.500 8.500h8v5h-8zl4 3 4-3" fill="#f8e090" stroke="#b88820" />
          </svg>
        </div>
        <span className="pl-[10px]">16:06</span>
        <span className="mt-[14px] h-[16px] w-[12px] shrink-0 border border-[#103070] bg-[#2a70c8]" />
      </div>
    </footer>
  );
}

export default function App() {
  return (
    <div className="relative flex h-screen w-full flex-col overflow-hidden bg-[#d4d0c8] text-black">
      <GraphicEditor />
      <Taskbar />
      <ResultsViewer />
      <ResultsHistogram />
      <Excel />
      <div
        className={clsx(
          UI,
          "absolute -top-[26px] left-[988px] flex h-[46px] w-[46px] items-end justify-center rounded-full border-2 border-[#c8ecd0] bg-[#34b04c] pb-[4px] text-[12px] leading-[14px] font-bold text-white"
        )}
      >
        54
      </div>
    </div>
  );
}
